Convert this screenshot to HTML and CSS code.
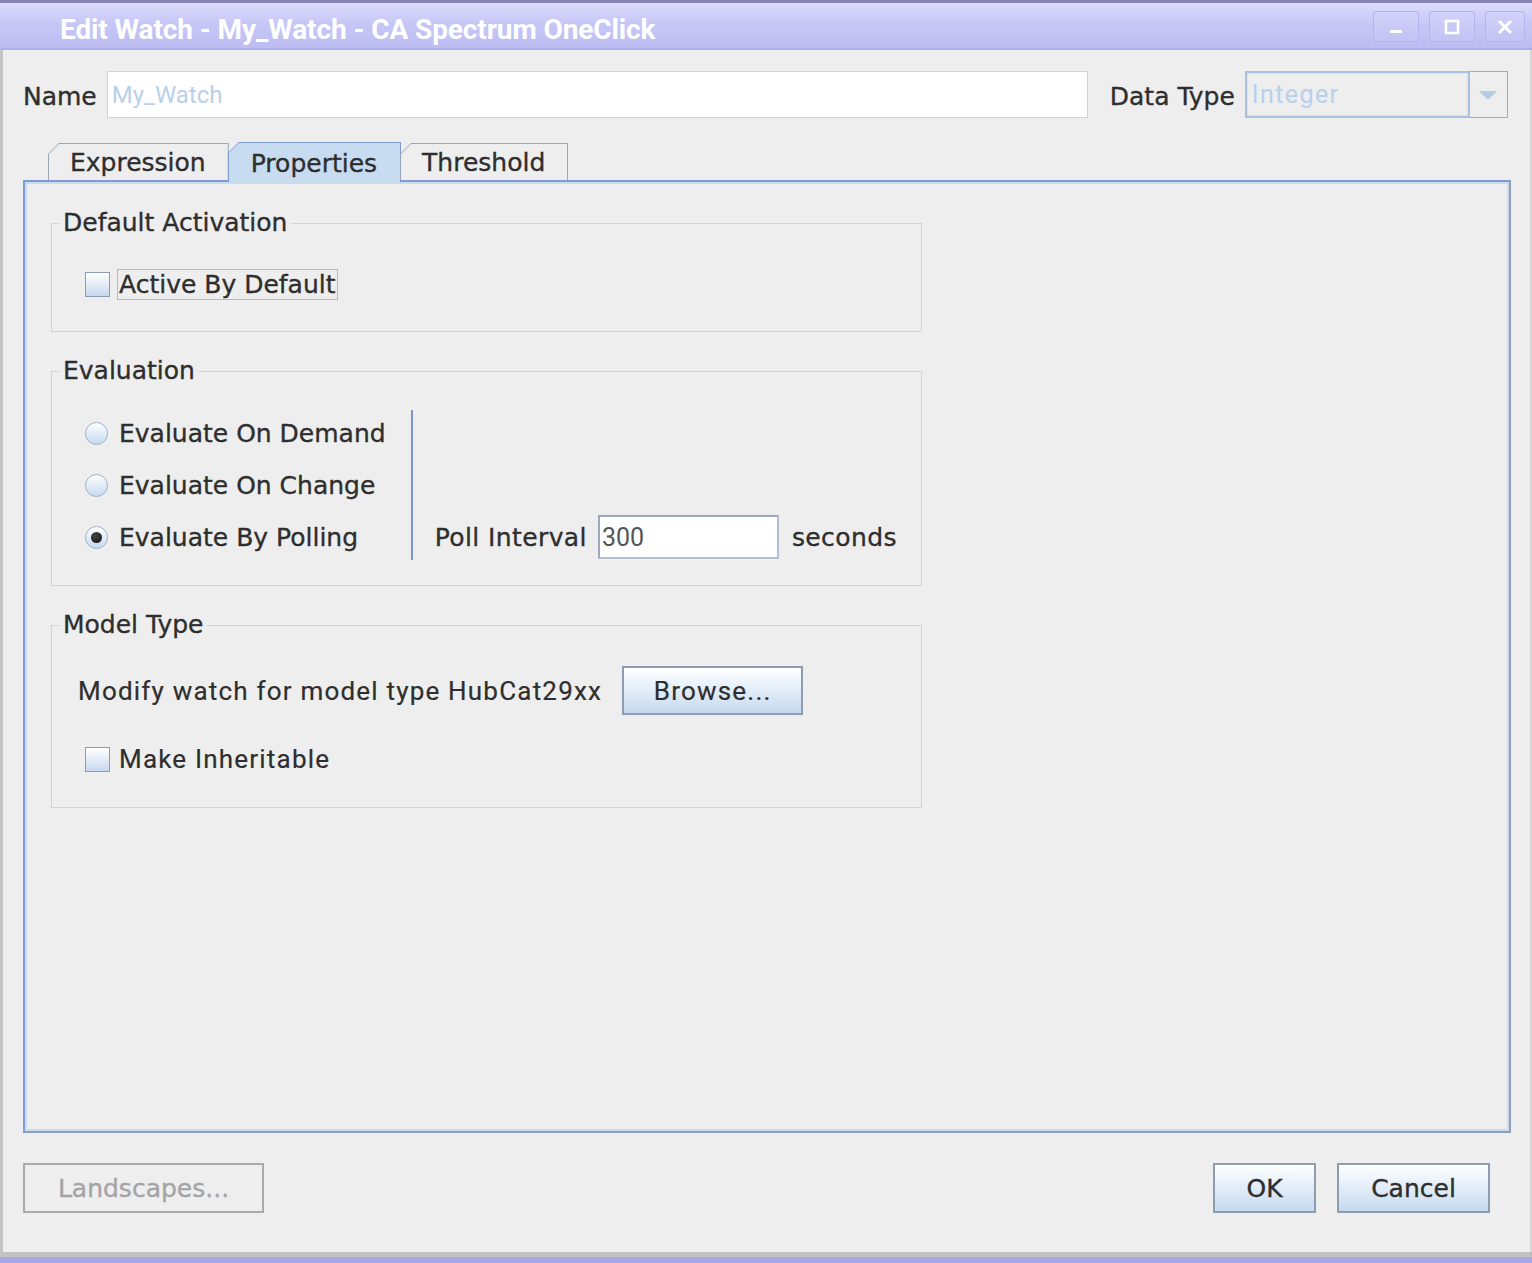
FILE: index.html
```html
<!DOCTYPE html>
<html lang="en">
<head>
    <meta charset="UTF-8">
    <meta name="viewport" content="width=device-width, initial-scale=1.0">
    <title>Edit Watch - My_Watch - CA Spectrum OneClick</title>
    <link rel="stylesheet" href="styles.css">
</head>
<body>

<div class="window">
    <!-- Title bar -->
    <div class="titlebar">
        <span class="title">Edit Watch - My_Watch - CA Spectrum OneClick</span>
        <div class="win-buttons">
            <span class="win-btn"><svg width="20" height="20" viewBox="0 0 20 20"><rect x="4" y="13" width="12" height="3" fill="#fff"/></svg></span>
            <span class="win-btn"><svg width="20" height="20" viewBox="0 0 20 20"><rect x="4" y="4" width="12" height="12" fill="none" stroke="#fff" stroke-width="2.5"/></svg></span>
            <span class="win-btn"><svg width="20" height="20" viewBox="0 0 20 20"><path d="M4 4 L16 16 M16 4 L4 16" stroke="#fff" stroke-width="3"/></svg></span>
        </div>
    </div>

    <div class="frame">
        <div class="name-row">
            <label class="lbl">Name</label>
            <div class="text-input name-input">My_Watch</div>
            <label class="lbl data-type-lbl">Data Type</label>
            <div class="combo">
                <div class="combo-text">Integer</div>
                <div class="combo-arrow"><svg width="20" height="12" viewBox="0 0 20 12"><path d="M1 2 L19 2 L10 11 Z" fill="#b4cce6"/></svg></div>
            </div>
        </div>

        <div class="tabs">
            <div class="tab"><span>Expression</span></div>
            <div class="tab tab-selected"><span>Properties</span></div>
            <div class="tab"><span>Threshold</span></div>
        </div>

        <div class="tab-panel">
            <fieldset class="group group-activation">
                <legend>Default Activation</legend>
                <div class="check-row">
                    <span class="checkbox"></span>
                    <span class="focus-label">Active By Default</span>
                </div>
            </fieldset>

            <fieldset class="group group-eval">
                <legend>Evaluation</legend>
                <div class="eval-body">
                    <div class="radios">
                        <div class="radio-row"><span class="radio"></span>Evaluate On Demand</div>
                        <div class="radio-row"><span class="radio"></span>Evaluate On Change</div>
                        <div class="radio-row"><span class="radio radio-on"></span>Evaluate By Polling</div>
                    </div>
                    <div class="separator"></div>
                    <div class="poll">
                        <span>Poll Interval</span>
                        <div class="text-input poll-input">300</div>
                        <span class="seconds">seconds</span>
                    </div>
                </div>
            </fieldset>

            <fieldset class="group group-model">
                <legend>Model Type</legend>
                <div class="model-row">
                    <span class="model-text">Modify watch for model type HubCat29xx</span>
                    <button class="btn btn-browse">Browse...</button>
                </div>
                <div class="check-row inherit-row">
                    <span class="checkbox"></span>
                    <span class="inherit-label">Make Inheritable</span>
                </div>
            </fieldset>
        </div>

        <div class="footer">
            <button class="btn btn-disabled">Landscapes...</button>
            <div class="footer-right">
                <button class="btn btn-ok">OK</button>
                <button class="btn btn-cancel">Cancel</button>
            </div>
        </div>
    </div>
    <div class="bottom-edge"></div>
</div>

</body>
</html>
```

FILE: styles.css
```css
body {
    margin: 0;
    padding: 0;
    background-color: #eeeeee;
    font-family: "DejaVu Sans", Verdana, sans-serif;
    font-size: 25px;
    color: #2e2e2e;
    -webkit-text-stroke: 0.35px;
}

.window {
    width: 1532px;
    height: 1263px;
    display: flex;
    flex-direction: column;
    overflow: hidden;
}

/* Title bar */
.titlebar {
    height: 47px;
    flex-shrink: 0;
    border-top: 3px solid #8686b4;
    background: linear-gradient(#dcdcfd, #c6c6f6 45%, #bcbcf2);
    box-shadow: inset 0 -2px 0 #b0b0ea;
    display: flex;
    align-items: center;
    justify-content: space-between;
}

.title {
    font-family: Roboto, "Liberation Sans", sans-serif;
    font-weight: bold;
    font-size: 28px;
    color: #ffffff;
    margin-left: 60px;
    padding-top: 6px;
    letter-spacing: -0.1px;
    -webkit-text-stroke: 0;
}

.win-buttons {
    display: flex;
    gap: 10px;
    margin-right: 7px;
}

.win-btn {
    width: 44px;
    height: 29px;
    border: 1px solid #b4b4ee;
    border-radius: 3px;
    background: linear-gradient(#d2d2fa, #c2c2f4);
    display: flex;
    align-items: center;
    justify-content: center;
}

.win-btn:last-child {
    width: 38px;
}

/* Frame */
.frame {
    flex: 1;
    display: flex;
    flex-direction: column;
    border-left: 3px solid #c4c4c4;
    border-right: 2px solid #d6d6d6;
    padding: 21px 19px 0 20px;
    background-color: #eeeeee;
}

.name-row {
    display: flex;
    align-items: center;
    height: 47px;
}

.lbl {
    margin-right: 10px;
    padding-top: 3px;
}

.text-input {
    background-color: #ffffff;
    border: 1px solid #c2d6ec;
    box-sizing: border-box;
    font-family: Roboto, "Liberation Sans", sans-serif;
    display: flex;
    align-items: center;
    padding-left: 4px;
    -webkit-text-stroke: 0;
}

.name-input {
    width: 981px;
    height: 47px;
    color: #b8d0ea;
    font-size: 24px;
}

.data-type-lbl {
    margin-left: 22px;
}

.combo {
    display: flex;
    height: 47px;
    width: 263px;
    box-sizing: border-box;
}

.combo-text {
    flex: 1;
    border: 2px solid #a9c0de;
    box-shadow: inset 0 0 0 1px #d6e4f4;
    font-family: Roboto, "Liberation Sans", sans-serif;
    font-size: 25px;
    letter-spacing: 1.4px;
    color: #b8d0ea;
    display: flex;
    align-items: center;
    padding-left: 5px;
    -webkit-text-stroke: 0;
}

.combo-arrow {
    width: 37px;
    border: 1px solid #a8a8a8;
    border-left: none;
    display: flex;
    align-items: center;
    justify-content: center;
}

/* Tabs */
.tabs {
    display: flex;
    margin-top: 25px;
    margin-left: 25px;
    height: 37px;
    position: relative;
    z-index: 1;
}

.tab {
    background-color: #9aa6b6;
    padding: 1px 1px 0 1px;
    clip-path: polygon(11px 0, 100% 0, 100% 100%, 0 100%, 0 11px);
    margin-right: -1px;
}

.tab span {
    display: flex;
    align-items: center;
    height: 100%;
    padding: 0 22px 0 21px;
    background-color: #eeeeee;
    clip-path: polygon(10px 0, 100% 0, 100% 100%, 0 100%, 0 10px);
}

.tab-selected {
    background-color: #7f9bd2;
    height: 39px;
    margin-top: -1px;
    padding-bottom: 0;
}

.tab-selected span {
    background-color: #c8dcf1;
    padding-top: 1px;
    padding-left: 22px;
    padding-right: 23px;
}

/* Tab panel */
.tab-panel {
    height: 953px;
    box-sizing: border-box;
    border: 2px solid #7f9bd2;
    border-right-color: #8e9fb8;
    border-bottom-color: #8e9fb8;
    box-shadow: inset 2px 2px 0 #c8dcf1, inset -2px -2px 0 #c8dcf1;
    padding: 26px 0 0 26px;
    display: flex;
    flex-direction: column;
    gap: 24px;
}

.group {
    width: 871px;
    box-sizing: border-box;
    margin: 0;
    border: 1px solid #c4d6ea;
    padding: 0 0 0 33px;
    min-inline-size: 0;
}

.group legend {
    margin-left: -26px;
    padding: 0 4px;
    line-height: 30px;
}

.group-activation {
    padding-top: 30px;
    padding-bottom: 31px;
}

.check-row {
    display: flex;
    align-items: center;
    height: 32px;
    gap: 7px;
}

.checkbox {
    width: 23px;
    height: 23px;
    border: 1px solid #8c9cb2;
    background: linear-gradient(#ffffff, #c6d8ee);
    display: inline-block;
}

.focus-label {
    border: 1px solid #a9bdd6;
    padding: 0 1px;
    line-height: 29px;
}

/* Evaluation */
.group-eval {
    padding-top: 21px;
    padding-bottom: 22px;
}

.eval-body {
    display: flex;
    align-items: center;
}

.radio-row {
    display: flex;
    align-items: center;
    height: 52px;
    gap: 11px;
}

.radio {
    width: 21px;
    height: 21px;
    border: 1px solid #9fb0c8;
    border-radius: 50%;
    background: linear-gradient(#ffffff, #c6daf0);
    display: inline-block;
    position: relative;
}

.radio-on::after {
    content: "";
    position: absolute;
    left: 5px;
    top: 5px;
    width: 11px;
    height: 11px;
    border-radius: 50%;
    background: radial-gradient(circle at 40% 35%, #444444, #111111);
}

.separator {
    width: 2px;
    height: 150px;
    background-color: #7d93c9;
    margin-left: 25px;
    margin-right: 22px;
}

.poll {
    align-self: flex-end;
    height: 52px;
    display: flex;
    align-items: center;
    letter-spacing: 0.4px;
}

.poll-input {
    width: 181px;
    height: 44px;
    margin-left: 11px;
    margin-right: 13px;
    border: 2px solid #9aa8ba;
    border-right-color: #b4c0d0;
    border-bottom-color: #b4c0d0;
    font-size: 25px;
    color: #555555;
    padding-left: 2px;
    letter-spacing: 0;
}

/* Model type */
.group-model {
    padding-top: 26px;
    padding-bottom: 32px;
}

.model-row {
    display: flex;
    align-items: center;
    margin-left: -7px;
    height: 49px;
}

.model-text,
.inherit-label {
    font-family: Roboto, "Liberation Sans", sans-serif;
    font-size: 26px;
    letter-spacing: 1.2px;
    -webkit-text-stroke: 0.2px;
}

.inherit-row {
    margin-top: 28px;
    gap: 9px;
}

/* Buttons */
.btn {
    font-family: "DejaVu Sans", Verdana, sans-serif;
    font-size: 25px;
    color: #2e2e2e;
    -webkit-text-stroke: 0.35px;
    height: 50px;
    box-sizing: border-box;
    border: 2px solid #8e9cb0;
    background: linear-gradient(#ffffff, #eaf2fb 35%, #c6d9ef);
    padding: 0;
    cursor: pointer;
}

.btn-browse {
    font-family: Roboto, "Liberation Sans", sans-serif;
    font-size: 26px;
    letter-spacing: 1.2px;
    -webkit-text-stroke: 0.2px;
    width: 181px;
    height: 49px;
    margin-left: 20px;
}

.footer {
    display: flex;
    justify-content: space-between;
    margin-top: 30px;
    padding-right: 21px;
}

.btn-disabled {
    width: 241px;
    background: #eeeeee;
    border-color: #aaaaaa;
    color: #a4a4a4;
    cursor: default;
}

.footer-right {
    display: flex;
    gap: 21px;
}

.btn-ok {
    width: 103px;
}

.btn-cancel {
    width: 153px;
}

.bottom-edge {
    height: 11px;
    flex-shrink: 0;
    border-top: 5px solid #c2c2c2;
    background-color: #a8a8e8;
    box-sizing: border-box;
}
```
